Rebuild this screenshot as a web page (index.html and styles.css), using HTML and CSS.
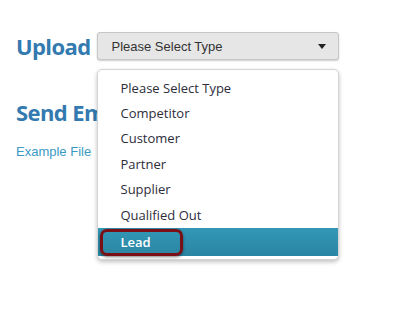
FILE: index.html
```html
<!DOCTYPE html>
<html lang="en">
<head>
    <meta charset="UTF-8">
    <title>Upload</title>
    <link rel="stylesheet" href="styles.css">
</head>
<body>
    <div class="page">
        <div class="upload-row">
            <h1>Upload</h1>
            <div class="select-wrap">
                <div class="select-box">
                    <span>Please Select Type</span>
                    <span class="caret"></span>
                </div>
                <ul class="menu">
                    <li>Please Select Type</li>
                    <li>Competitor</li>
                    <li>Customer</li>
                    <li>Partner</li>
                    <li>Supplier</li>
                    <li>Qualified Out</li>
                    <li class="active"><span class="mark">Lead</span></li>
                </ul>
            </div>
        </div>
        <h2>Send Email</h2>
        <a class="example" href="#">Example File</a>
    </div>
</body>
</html>
```

FILE: styles.css
```css
* {
    margin: 0;
    padding: 0;
    box-sizing: border-box;
}

html, body {
    min-height: 100%;
    height: 100%;
}

body {
    background: #fff;
    font-family: 'Liberation Sans', Arial, sans-serif;
}

.page {
    padding: 31px 16px 0 16px;
    min-height: 309px;
}

.upload-row {
    display: flex;
    align-items: flex-start;
    gap: 6px;
    height: 66px;
}

h1, h2 {
    font-family: 'Open Sans', sans-serif;
    font-weight: 700;
    color: #337ab0;
    font-size: 22px;
    letter-spacing: -0.6px;
    line-height: 30px;
}

.select-wrap {
    position: relative;
    width: 242px;
}

.select-box {
    height: 28px;
    margin-top: 1px;
    background: #e6e6e6;
    border: 1px solid #c6c6c6;
    border-radius: 3px;
    box-shadow: 0 1px 2px rgba(0,0,0,0.2);
    display: flex;
    align-items: center;
    justify-content: space-between;
    padding: 0 12px 0 14px;
    font-size: 13px;
    color: #333;
}

.caret {
    width: 0;
    height: 0;
    border-left: 4px solid transparent;
    border-right: 4px solid transparent;
    border-top: 5px solid #222;
}

.menu {
    position: absolute;
    top: 38px;
    left: 0;
    width: 242px;
    list-style: none;
    background: #fff;
    border: 1px solid #d4d4d4;
    border-radius: 5px;
    box-shadow: 0 2px 4px rgba(0,0,0,0.25);
    padding: 5px 0 3px 0;
    overflow: hidden;
    font-family: 'Open Sans', sans-serif;
    font-size: 13px;
    color: #2d2d3a;
}

.menu li {
    height: 25.5px;
    line-height: 25.5px;
    padding-left: 23px;
}

.menu li:first-child {
    padding-top: 1px;
}

.menu li.active {
    height: 28px;
    line-height: 28px;
    background: linear-gradient(#3397b6, #2a86a3);
    color: #fff;
    font-weight: 600;
    padding-left: 2px;
}

.mark {
    display: inline-block;
    width: 83px;
    height: 27px;
    line-height: 21px;
    padding-left: 18px;
    border: 3px solid #7a1015;
    border-radius: 7px;
    box-shadow: 0 1px 3px rgba(0,0,0,0.5);
}

.example {
    display: block;
    margin-top: 17px;
    font-size: 13px;
    color: #3b9ac4;
    text-decoration: none;
}
```
